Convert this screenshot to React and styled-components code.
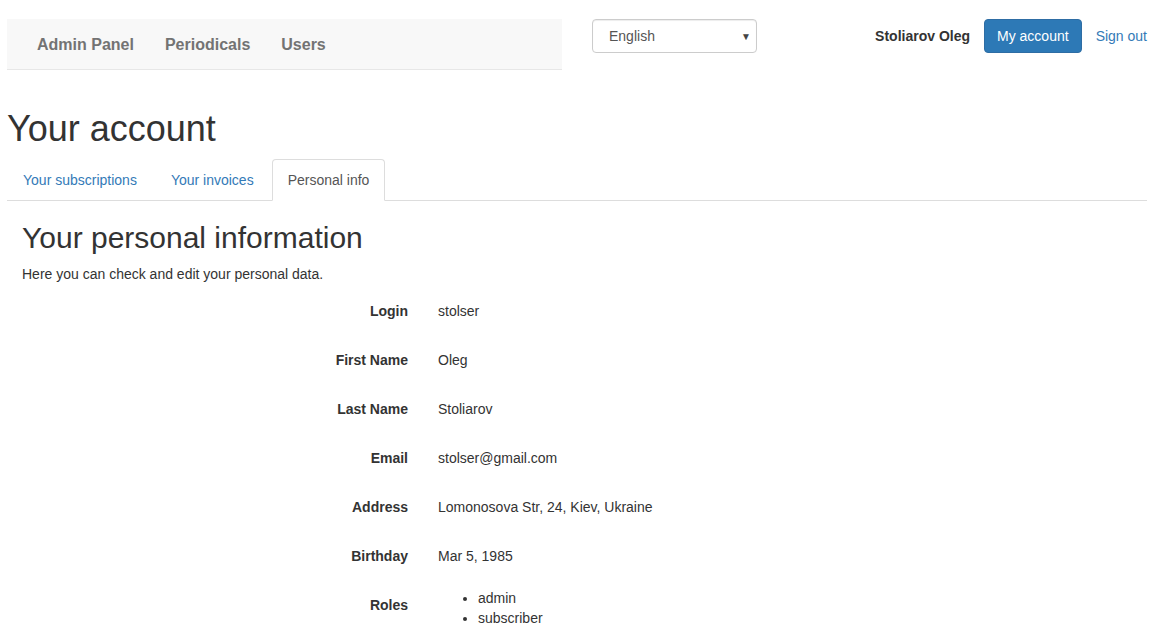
import React from "react";
import styled, { createGlobalStyle } from "styled-components";

const Global = createGlobalStyle`
  html, body { margin: 0; padding: 0; background: #fff; }
  body {
    font-family: "Liberation Sans", Arial, Helvetica, sans-serif;
    font-size: 14px;
    line-height: 20px;
    color: #333;
  }
  * { box-sizing: border-box; }
`;

const Page = styled.div`
  padding: 19px 8px 0 7px;
  width: 1155px;
`;

const Header = styled.header`
  display: flex;
  align-items: flex-start;
  margin-bottom: 39px;
`;

const Navbar = styled.nav`
  width: 555px;
  height: 51px;
  background: #f8f8f8;
  border-bottom: 1px solid #e7e7e7;
  display: flex;
  padding-left: 15px;
`;

const NavLink = styled.a`
  display: block;
  padding: 16px 15px 14px;
  margin-right: 1px;
  font-size: 16px;
  font-weight: bold;
  line-height: 20px;
  color: #737373;
  text-decoration: none;
`;

const SelectWrap = styled.div`
  position: relative;
  margin-left: 30px;
  width: 165px;
  height: 34px;
`;

const Select = styled.select`
  appearance: none;
  -webkit-appearance: none;
  width: 100%;
  height: 34px;
  padding: 6px 24px 6px 16px;
  border: 1px solid #ccc;
  border-radius: 4px;
  background: #fff;
  font-family: "Liberation Sans", Arial, sans-serif;
  font-size: 14px;
  color: #555;
  box-shadow: inset 0 1px 1px rgba(0,0,0,0.075);
`;

const Caret = styled.span`
  position: absolute;
  right: 6px;
  top: 8px;
  font-size: 10px;
  color: #444;
  pointer-events: none;
`;

const UserBox = styled.div`
  margin-left: auto;
  display: flex;
  align-items: center;
  height: 34px;
  gap: 14px;
`;

const UserName = styled.span`
  font-weight: bold;
  color: #333;
`;

const Button = styled.a`
  display: inline-block;
  padding: 6px 12px;
  line-height: 20px;
  background: #2d79b6;
  border: 1px solid #2e6da4;
  border-radius: 4px;
  color: #fff;
  text-decoration: none;
`;

const Link = styled.a`
  color: #337ab7;
  text-decoration: none;
`;

const Title = styled.h1`
  margin: 20px 0 10px;
  font-size: 36px;
  font-weight: 500;
  line-height: 1.1;
`;

const Tabs = styled.ul`
  list-style: none;
  margin: 0;
  padding: 0;
  display: flex;
  border-bottom: 1px solid #ddd;
`;

const Tab = styled.li`
  margin-bottom: -1px;
  margin-right: 2px;
  a {
    display: block;
    padding: 10px 15px;
    line-height: 20px;
    border: 1px solid ${p => (p.$active ? "#ddd" : "transparent")};
    border-bottom-color: transparent;
    border-radius: 4px 4px 0 0;
    background: ${p => (p.$active ? "#fff" : "transparent")};
    color: ${p => (p.$active ? "#555" : "#337ab7")};
    text-decoration: none;
  }
`;

const Pane = styled.section`
  padding: 0 15px;
`;

const Subtitle = styled.h2`
  margin: 20px 0 10px;
  font-size: 30px;
  font-weight: 500;
  line-height: 1.1;
`;

const Lead = styled.p`
  margin: 0 0 10px;
`;

const Form = styled.div`
  display: grid;
  grid-template-columns: 386px 1fr;
  column-gap: 30px;
  row-gap: 15px;
`;

const Label = styled.div`
  text-align: right;
  font-weight: bold;
  padding-top: 7px;
  min-height: 34px;
`;

const Value = styled.div`
  padding-top: ${p => (p.$list ? "0" : "7px")};
  min-height: 34px;
`;

const Roles = styled.ul`
  margin: 0;
  padding-left: 40px;
`;

const rows = [
  ["Login", "stolser"],
  ["First Name", "Oleg"],
  ["Last Name", "Stoliarov"],
  ["Email", "stolser@gmail.com"],
  ["Address", "Lomonosova Str, 24, Kiev, Ukraine"],
  ["Birthday", "Mar 5, 1985"],
];

export default function App() {
  return (
    <Page>
      <Global />
      <Header>
        <Navbar>
          <NavLink href="#">Admin Panel</NavLink>
          <NavLink href="#">Periodicals</NavLink>
          <NavLink href="#">Users</NavLink>
        </Navbar>
        <SelectWrap>
          <Select defaultValue="en">
            <option value="en">English</option>
            <option value="ru">Русский</option>
          </Select>
          <Caret>▼</Caret>
        </SelectWrap>
        <UserBox>
          <UserName>Stoliarov Oleg</UserName>
          <Button href="#">My account</Button>
          <Link href="#">Sign out</Link>
        </UserBox>
      </Header>
      <Title>Your account</Title>
      <Tabs>
        <Tab><a href="#">Your subscriptions</a></Tab>
        <Tab><a href="#">Your invoices</a></Tab>
        <Tab $active><a href="#">Personal info</a></Tab>
      </Tabs>
      <Pane>
        <Subtitle>Your personal information</Subtitle>
        <Lead>Here you can check and edit your personal data.</Lead>
        <Form>
          {rows.map(([k, v]) => (
            <React.Fragment key={k}>
              <Label>{k}</Label>
              <Value>{v}</Value>
            </React.Fragment>
          ))}
          <Label>Roles</Label>
          <Value $list>
            <Roles>
              <li>admin</li>
              <li>subscriber</li>
            </Roles>
          </Value>
        </Form>
      </Pane>
    </Page>
  );
}
